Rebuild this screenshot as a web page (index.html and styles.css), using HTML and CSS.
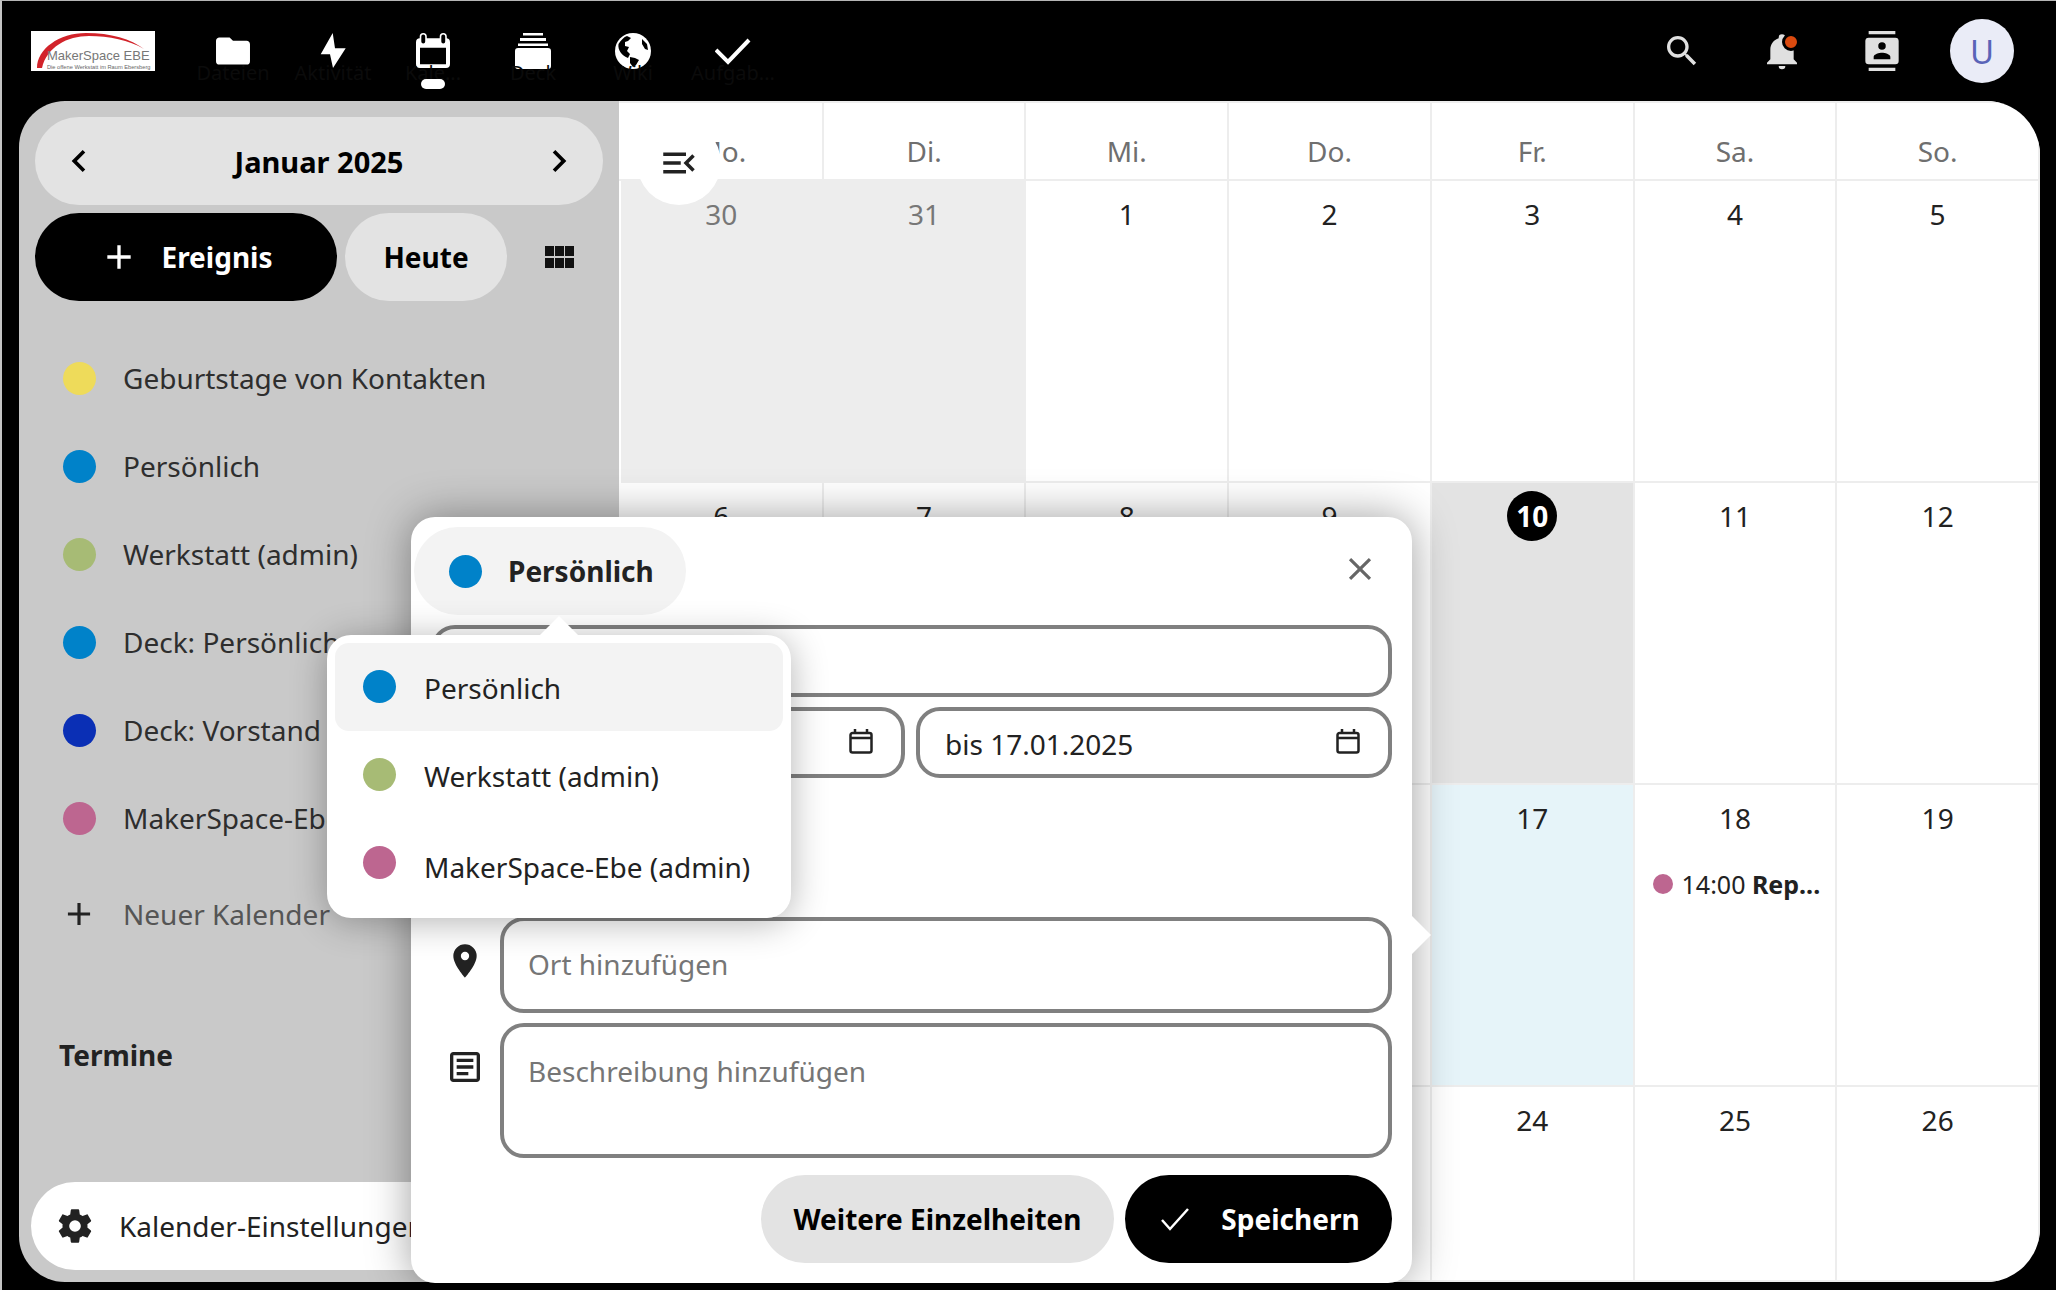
FILE: index.html
```html
<!DOCTYPE html>
<html lang="de">
  <head>
    <meta charset="UTF-8" />
    <meta name="viewport" content="width=device-width, initial-scale=1.0" />
    <title>Kalender</title>
    <link rel="stylesheet" href="styles.css">
  </head>
  <body>
    <div id="app">
      <!-- Top bar -->
      <header class="top-bar">
        <div class="logo">
          <svg class="logo-arc" viewBox="0 0 124 40" aria-hidden="true">
            <path d="M6 37C6 18 28 2 55 2c25 0 45 6 58 16C98 9 78 5 58 5 36 5 16 16 11 37Z" fill="#d2232a" />
          </svg>
          <span class="logo-name">MakerSpace EBE</span>
          <span class="logo-sub">Die offene Werkstatt im Raum Ebersberg</span>
        </div>
        <nav class="apps">
          <a class="app">
            <svg class="app-icon" viewBox="1.4 1.4 21.2 21.2"><path d="M10,4H4C2.89,4 2,4.89 2,6V18A2,2 0 0,0 4,20H20A2,2 0 0,0 22,18V8C22,6.89 21.1,6 20,6H12L10,4Z" /></svg>
            <span>Dateien</span>
          </a>
          <a class="app">
            <svg class="app-icon" viewBox="0 0 36 36"><path d="M17.700 0L5.700 21.300H15L18 35L30.700 15.300H20Z" /></svg>
            <span>Aktivität</span>
          </a>
          <a class="app active">
            <svg class="app-icon" viewBox="0 0 36 36">
              <path fill-rule="evenodd" d="M5 5.300H31a4 4 0 0 1 4 4V31a4 4 0 0 1-4 4H5a4 4 0 0 1-4-4V9.300a4 4 0 0 1 4-4ZM5 14.700V31.300H31V14.700Z" />
              <rect class="cal-ring" x="5.500" y="0.800" width="5.500" height="10.500" rx="2.750" />
              <rect class="cal-ring" x="25.500" y="0.800" width="5.500" height="10.500" rx="2.750" />
            </svg>
            <span>Kale...</span>
          </a>
          <a class="app">
            <svg class="app-icon" viewBox="0 0 36 36"><path d="M8 0H28V2.500H8ZM5 5H31V8H5ZM3 10.500H33V13H3ZM3 15H33a3 3 0 0 1 3 3V33a3 3 0 0 1-3 3H3a3 3 0 0 1-3-3V18a3 3 0 0 1 3-3Z" /></svg>
            <span>Deck</span>
          </a>
          <a class="app">
            <svg class="app-icon" viewBox="0 0 36 36">
              <circle cx="18" cy="18" r="18" fill="#fff" />
              <path fill="#000" d="M3.500 11C6 7 9 4 12 3L16 5 13 8 10 9V13L14 14 12 18 15 21 13 25C7 23 2.500 17 3.500 11ZM15 24L20 25 24 27 21 32 18 34 15 30ZM27 6L32 11 33 17 30 16 27 11Z" />
            </svg>
            <span>Wiki</span>
          </a>
          <a class="app">
            <svg class="app-icon" viewBox="0 0 36 36"><path d="M1 17L13 29 34 7" fill="none" stroke="#fff" stroke-width="4" /></svg>
            <span>Aufgab...</span>
          </a>
        </nav>
        <div class="top-actions">
          <a class="top-action">
            <svg viewBox="0 0 24 24"><path d="M9.500,3A6.500,6.500 0 0,1 16,9.500C16,11.110 15.410,12.590 14.440,13.730L14.710,14H15.500L20.500,19L19,20.500L14,15.500V14.710L13.730,14.440C12.590,15.410 11.110,16 9.500,16A6.500,6.500 0 0,1 3,9.500A6.500,6.500 0 0,1 9.500,3M9.500,5C7,5 5,7 5,9.500C5,12 7,14 9.500,14C12,14 14,12 14,9.500C14,7 12,5 9.500,5Z" /></svg>
          </a>
          <a class="top-action bell">
            <svg viewBox="0 0 24 24"><path d="M21,19V20H3V19L5,17V11C5,7.900 7.030,5.170 10,4.290C10,4.190 10,4.100 10,4A2,2 0 0,1 12,2A2,2 0 0,1 14,4C14,4.100 14,4.190 14,4.290C16.970,5.170 19,7.900 19,11V17L21,19M14,21A2,2 0 0,1 12,23A2,2 0 0,1 10,21" /></svg>
            <i class="bell-dot"></i>
          </a>
          <a class="top-action">
            <svg viewBox="0 0 24 24"><path d="M20,0H4V2H20V0M4,24H20V22H4V24M20,4H4A2,2 0 0,0 2,6V18A2,2 0 0,0 4,20H20A2,2 0 0,0 22,18V6A2,2 0 0,0 20,4M12,6.750A2.250,2.250 0 0,1 14.250,9A2.250,2.250 0 0,1 12,11.250A2.250,2.250 0 0,1 9.750,9A2.250,2.250 0 0,1 12,6.750M17,17H7V15.500C7,13.830 10.330,13 12,13C13.670,13 17,13.830 17,15.500V17Z" /></svg>
          </a>
          <a class="top-action"><span class="avatar">U</span></a>
        </div>
      </header>

      <div class="content">
        <!-- Sidebar -->
        <aside class="sidebar">
          <div class="month-pill">
            <svg viewBox="0 0 24 24"><path d="M15.410,16.580L10.830,12L15.410,7.410L14,6L8,12L14,18L15.410,16.580Z" /></svg>
            <strong>Januar 2025</strong>
            <svg viewBox="0 0 24 24"><path d="M8.590,16.580L13.170,12L8.590,7.410L10,6L16,12L10,18L8.590,16.580Z" /></svg>
          </div>
          <div class="side-buttons">
            <button class="btn btn-dark new-event">
              <svg viewBox="0 0 24 24"><path d="M19,13H13V19H11V13H5V11H11V5H13V11H19V13Z" /></svg>
              Ereignis
            </button>
            <button class="btn btn-grey today">Heute</button>
            <svg class="grid-icon" viewBox="0 0 29 22"><path d="M0 0H9V10H0ZM10 0H19V10H10ZM20 0H29V10H20ZM0 12H9V22H0ZM10 12H19V22H10ZM20 12H29V22H20Z" /></svg>
          </div>
          <ul class="cal-list">
            <li><i class="dot yellow"></i>Geburtstage von Kontakten</li>
            <li><i class="dot blue"></i>Persönlich</li>
            <li><i class="dot green"></i>Werkstatt (admin)</li>
            <li><i class="dot blue"></i>Deck: Persönlich</li>
            <li><i class="dot navy"></i>Deck: Vorstand</li>
            <li><i class="dot pink"></i>MakerSpace-Ebe (admin)</li>
          </ul>
          <div class="new-cal">
            <svg viewBox="0 0 24 24"><path d="M19,13H13V19H11V13H5V11H11V5H13V11H19V13Z" /></svg>
            Neuer Kalender
          </div>
          <h3 class="termine">Termine</h3>
          <div class="settings">
            <svg viewBox="0 0 24 24"><path d="M12,15.500A3.500,3.500 0 0,1 8.500,12A3.500,3.500 0 0,1 12,8.500A3.500,3.500 0 0,1 15.500,12A3.500,3.500 0 0,1 12,15.500M19.430,12.970C19.470,12.650 19.500,12.330 19.500,12C19.500,11.670 19.470,11.340 19.430,11L21.540,9.370C21.730,9.220 21.780,8.950 21.660,8.730L19.660,5.270C19.540,5.050 19.270,4.960 19.050,5.050L16.560,6.050C16.040,5.660 15.500,5.320 14.870,5.070L14.500,2.420C14.460,2.180 14.250,2 14,2H10C9.750,2 9.540,2.180 9.500,2.420L9.130,5.070C8.500,5.320 7.960,5.660 7.440,6.050L4.950,5.050C4.730,4.960 4.460,5.050 4.340,5.270L2.340,8.730C2.210,8.950 2.270,9.220 2.460,9.370L4.570,11C4.530,11.340 4.500,11.670 4.500,12C4.500,12.330 4.530,12.650 4.570,12.970L2.460,14.630C2.270,14.780 2.210,15.050 2.340,15.270L4.340,18.730C4.460,18.950 4.730,19.030 4.950,18.950L7.440,17.940C7.960,18.340 8.500,18.680 9.130,18.930L9.500,21.580C9.540,21.820 9.750,22 10,22H14C14.250,22 14.460,21.820 14.500,21.580L14.870,18.930C15.500,18.670 16.040,18.340 16.560,17.940L19.050,18.950C19.270,19.030 19.540,18.950 19.660,18.730L21.660,15.270C21.780,15.050 21.730,14.780 21.540,14.630L19.430,12.970Z" /></svg>
            Kalender-Einstellungen
          </div>
        </aside>

        <!-- Month grid -->
        <main class="calendar">
          <div class="week-head">
            <div>Mo.</div><div>Di.</div><div>Mi.</div><div>Do.</div><div>Fr.</div><div>Sa.</div><div>So.</div>
          </div>
          <div class="weeks">
            <div class="day other">30</div><div class="day other">31</div><div class="day">1</div><div class="day">2</div><div class="day">3</div><div class="day">4</div><div class="day">5</div>
            <div class="day">6</div><div class="day">7</div><div class="day">8</div><div class="day">9</div><div class="day today-cell"><span class="today-num">10</span></div><div class="day">11</div><div class="day">12</div>
            <div class="day">13</div><div class="day">14</div><div class="day">15</div><div class="day">16</div><div class="day selected">17</div>
            <div class="day">18
              <div class="event"><i class="event-dot"></i>14:00&nbsp;<b>Rep...</b></div>
            </div>
            <div class="day">19</div>
            <div class="day">20</div><div class="day">21</div><div class="day">22</div><div class="day">23</div><div class="day">24</div><div class="day">25</div><div class="day">26</div>
          </div>
          <button class="nav-toggle" aria-label="Navigation schließen">
            <svg viewBox="0 0 24 24"><path d="M21,15.610L19.590,17L14.580,12L19.590,7L21,8.390L17.440,12L21,15.610M3,6H16V8H3V6M3,13V11H13V13H3M3,18V16H16V18H3Z" /></svg>
          </button>
        </main>
      </div>

      <!-- New event popover -->
      <section class="popover">
        <div class="pop-head">
          <div class="cal-picker"><i class="dot blue"></i>Persönlich</div>
          <svg class="pop-close" viewBox="0 0 24 24"><path d="M19,6.410L17.590,5L12,10.590L6.410,5L5,6.410L10.590,12L5,17.590L6.410,19L12,13.410L17.590,19L19,17.590L13.410,12L19,6.410Z" /></svg>
        </div>
        <div class="field title-field"></div>
        <div class="date-row">
          <div class="field date-field date-from">
            <span></span>
            <svg viewBox="0 0 24 25"><path d="M3.500 4H20.500a2 2 0 0 1 2 2V21.500a2 2 0 0 1-2 2H3.500a2 2 0 0 1-2-2V6a2 2 0 0 1 2-2ZM1.500 9H22.500M6 0V4M18 0V4" /></svg>
          </div>
          <div class="field date-field">
            <span>bis 17.01.2025</span>
            <svg viewBox="0 0 24 25"><path d="M3.500 4H20.500a2 2 0 0 1 2 2V21.500a2 2 0 0 1-2 2H3.500a2 2 0 0 1-2-2V6a2 2 0 0 1 2-2ZM1.500 9H22.500M6 0V4M18 0V4" /></svg>
          </div>
        </div>
        <div class="icon-row location">
          <svg viewBox="0 0 24 24"><path d="M12,11.500A2.500,2.500 0 0,1 9.500,9A2.500,2.500 0 0,1 12,6.500A2.500,2.500 0 0,1 14.500,9A2.500,2.500 0 0,1 12,11.500M12,2A7,7 0 0,0 5,9C5,14.250 12,22 12,22C12,22 19,14.250 19,9A7,7 0 0,0 12,2Z" /></svg>
          <div class="field placeholder">Ort hinzufügen</div>
        </div>
        <div class="icon-row description">
          <svg viewBox="0 0 24 24"><path d="M5,3C3.890,3 3,3.890 3,5V19C3,20.110 3.890,21 5,21H19C20.110,21 21,20.110 21,19V5C21,3.890 20.110,3 19,3H5M5,5H19V19H5V5M7,7V9H17V7H7M7,11V13H17V11H7M7,15V17H14V15H7Z" /></svg>
          <div class="field placeholder">Beschreibung hinzufügen</div>
        </div>
        <div class="pop-actions">
          <button class="btn btn-grey more">Weitere Einzelheiten</button>
          <button class="btn btn-dark save">
            <svg viewBox="0 0 30 24"><path d="M2 13l8 9L28 2" fill="none" stroke="#fff" stroke-width="2.500" /></svg>
            Speichern
          </button>
        </div>

        <div class="pop-arrow"></div>

        <!-- Calendar dropdown -->
        <div class="dropdown">
          <div class="dropdown-arrow"></div>
          <div class="drop-item current"><i class="dot blue"></i><span>Persönlich</span></div>
          <div class="drop-item"><i class="dot green"></i><span>Werkstatt (admin)</span></div>
          <div class="drop-item"><i class="dot pink"></i><span>MakerSpace-Ebe (admin)</span></div>
        </div>
      </section>
    </div>
  </body>
</html>
```

FILE: styles.css
```css
* {
  box-sizing: border-box;
  margin: 0;
  padding: 0;
}

html,
body {
  height: 100%;
}

body {
  background-color: #000;
  font-family: "Noto Sans", "Open Sans", sans-serif;
  font-size: 28px;
  color: #222;
  overflow: hidden;
}

#app {
  position: relative;
  height: 100%;
  display: flex;
  flex-direction: column;
  border-top: 1px solid #b5b5b5;
  border-left: 2px solid #c4c4c4;
}

/* Top bar */
.top-bar {
  height: 100px;
  flex-shrink: 0;
  display: flex;
  align-items: flex-start;
  padding: 0 24px 0 29px;
}

.logo {
  position: relative;
  width: 124px;
  height: 40px;
  margin-top: 30px;
  margin-right: 28px;
  background-color: #fff;
  font-family: "Liberation Sans", sans-serif;
  overflow: hidden;
}

.logo-arc {
  position: absolute;
  left: 0;
  top: 0;
  width: 124px;
  height: 40px;
}

.logo-name {
  position: absolute;
  left: 16px;
  top: 17px;
  font-size: 13px;
  line-height: 16px;
  color: #777;
  white-space: nowrap;
}

.logo-sub {
  position: absolute;
  left: 16px;
  top: 32px;
  font-size: 5.700px;
  line-height: 8px;
  color: #666;
  white-space: nowrap;
}

.apps {
  display: flex;
}

.app {
  position: relative;
  width: 100px;
  height: 100px;
  padding-top: 32px;
  display: flex;
  flex-direction: column;
  align-items: center;
  font-size: 20px;
  color: #0b0b0b;
}

.app-icon {
  width: 36px;
  height: 36px;
  fill: #fff;
  flex-shrink: 0;
}

.cal-ring {
  fill: #000;
  stroke: #fff;
  stroke-width: 1.600;
}

.app span {
  margin-top: -8px;
  line-height: 24px;
  white-space: nowrap;
}

.app.active::after {
  content: "";
  position: absolute;
  left: 38px;
  top: 78px;
  width: 24px;
  height: 10px;
  border-radius: 5px;
  background-color: #fff;
}

.top-actions {
  margin-left: auto;
  display: flex;
}

.top-action {
  position: relative;
  width: 100px;
  height: 100px;
  display: flex;
  align-items: center;
  justify-content: center;
}

.top-action svg {
  width: 40px;
  height: 40px;
  fill: #e0e0e0;
}

.bell-dot {
  position: absolute;
  left: 50px;
  top: 32px;
  width: 18px;
  height: 18px;
  border-radius: 50%;
  background-color: #db4a0f;
  border: 3px solid #000;
}

.avatar {
  width: 64px;
  height: 64px;
  border-radius: 50%;
  background-color: #eaecf7;
  color: #5a64b8;
  font-size: 33px;
  display: flex;
  align-items: center;
  justify-content: center;
}

.content {
  flex: 1;
  min-height: 0;
  display: flex;
  padding: 0 16px 8px 17px;
}

/* Sidebar */
.sidebar {
  width: 600px;
  flex-shrink: 0;
  display: flex;
  flex-direction: column;
  padding: 16px 16px 12px;
  background-color: #c9c9c9;
  border-radius: 46px 0 0 46px;
}

.month-pill {
  height: 88px;
  flex-shrink: 0;
  display: flex;
  align-items: center;
  justify-content: space-between;
  padding: 0 22px;
  border-radius: 44px;
  background-color: #e3e3e3;
  color: #000;
  font-size: 29px;
}

.month-pill svg {
  width: 44px;
  height: 44px;
  fill: #000;
}

.side-buttons {
  display: flex;
  align-items: center;
  margin-top: 8px;
}

.btn {
  height: 88px;
  border: none;
  border-radius: 44px;
  font-family: inherit;
  font-size: 28px;
  font-weight: 700;
  display: flex;
  align-items: center;
  justify-content: center;
}

.btn-dark {
  background-color: #000;
  color: #fff;
}

.btn-grey {
  background-color: #e3e3e3;
  color: #000;
}

.new-event {
  width: 302px;
  gap: 22px;
}

.new-event svg {
  width: 40px;
  height: 40px;
  fill: #fff;
}

.today {
  width: 162px;
  margin-left: 8px;
}

.grid-icon {
  width: 29px;
  height: 22px;
  margin-left: 38px;
  fill: #111;
}

.cal-list {
  list-style: none;
  margin-top: 33px;
}

.cal-list li {
  height: 88px;
  display: flex;
  align-items: center;
  padding-left: 28px;
  color: #2e2e2e;
  white-space: nowrap;
}

.dot {
  width: 33px;
  height: 33px;
  border-radius: 50%;
  flex-shrink: 0;
  margin-right: 27px;
}

.yellow {
  background-color: #eedb5a;
}

.blue {
  background-color: #0082c9;
}

.green {
  background-color: #a7bb75;
}

.navy {
  background-color: #0a2fb5;
}

.pink {
  background-color: #bd6690;
}

.new-cal {
  display: flex;
  align-items: center;
  height: 88px;
  margin-top: 8px;
  padding-left: 25px;
  color: #555;
  white-space: nowrap;
}

.new-cal svg {
  width: 38px;
  height: 38px;
  margin-right: 25px;
  fill: #222;
}

.termine {
  margin-top: 78px;
  padding-left: 24px;
  font-size: 28px;
  line-height: 38px;
  color: #222;
}

.settings {
  margin-top: auto;
  margin-left: -4px;
  height: 88px;
  flex-shrink: 0;
  display: flex;
  align-items: center;
  padding-left: 24px;
  border-radius: 44px;
  background-color: #fff;
  white-space: nowrap;
}

.settings svg {
  width: 40px;
  height: 40px;
  margin-right: 24px;
  fill: #222;
}

/* Calendar */
.calendar {
  position: relative;
  flex: 1;
  min-width: 0;
  display: flex;
  flex-direction: column;
  background-color: #fff;
  border-radius: 0 54px 54px 0;
  overflow: hidden;
}

.week-head {
  height: 80px;
  flex-shrink: 0;
  display: grid;
  grid-template-columns: repeat(7, 1fr);
  padding-left: 2px;
  border-top: 2px solid #eee;
  border-bottom: 2px solid #ededed;
}

.week-head div {
  padding-top: 27px;
  line-height: 42px;
  text-align: center;
  color: #6f6f6f;
  border-right: 2px solid #ededed;
}

.weeks {
  flex: 1;
  min-height: 0;
  display: grid;
  grid-template-columns: repeat(7, 1fr);
  grid-template-rows: 302px 302px 302px 1fr;
  padding-left: 2px;
}

.day {
  padding-top: 13px;
  line-height: 40px;
  text-align: center;
  border-right: 2px solid #ededed;
  border-bottom: 2px solid #ededed;
}

.day.other {
  background-color: #ededed;
  color: #777;
}

.today-cell {
  background-color: #e3e3e3;
  padding-top: 8px;
}

.today-num {
  display: inline-block;
  width: 50px;
  height: 50px;
  line-height: 50px;
  border-radius: 50%;
  background-color: #000;
  color: #fff;
  font-weight: 700;
}

.day.selected {
  background-color: #e6f4f9;
}

.event {
  display: flex;
  align-items: center;
  margin-top: 30px;
  padding-left: 18px;
  font-size: 25px;
  line-height: 32px;
  white-space: nowrap;
}

.event-dot {
  width: 20px;
  height: 20px;
  margin-right: 9px;
  border-radius: 50%;
  background-color: #bd6690;
}

.nav-toggle {
  position: absolute;
  left: 18px;
  top: 20px;
  width: 84px;
  height: 84px;
  border: none;
  border-radius: 50%;
  background-color: #fff;
  display: flex;
  align-items: center;
  justify-content: center;
}

.nav-toggle svg {
  width: 42px;
  height: 42px;
  fill: #222;
}

/* Popover */
.popover {
  position: absolute;
  left: 409px;
  top: 516px;
  width: 1001px;
  height: 766px;
  padding: 10px 20px 20px;
  display: flex;
  flex-direction: column;
  background-color: #fff;
  border-radius: 24px;
  box-shadow: 0 0 44px rgba(0, 0, 0, 0.38);
}

.pop-arrow {
  position: absolute;
  right: -19px;
  top: 398px;
  width: 0;
  height: 0;
  border-top: 20px solid transparent;
  border-bottom: 20px solid transparent;
  border-left: 20px solid #fff;
}

.pop-head {
  display: flex;
  align-items: center;
  justify-content: space-between;
  height: 88px;
  margin-left: -17px;
  flex-shrink: 0;
}

.cal-picker {
  height: 88px;
  width: 272px;
  display: flex;
  align-items: center;
  padding-left: 35px;
  border-radius: 44px;
  background-color: #f3f3f3;
  font-weight: 700;
  color: #222;
}

.cal-picker .dot {
  margin-right: 26px;
}

.pop-close {
  width: 38px;
  height: 38px;
  margin-right: 13px;
  margin-top: -4px;
  fill: #666;
}

.field {
  border: 4px solid #808080;
  border-radius: 24px;
  background-color: #fff;
}

.title-field {
  height: 72px;
  margin-top: 10px;
  flex-shrink: 0;
}

.date-row {
  display: flex;
  gap: 11px;
  margin-top: 10px;
  height: 71px;
  flex-shrink: 0;
}

.date-field {
  flex: 1;
  display: flex;
  align-items: center;
  justify-content: space-between;
  padding: 2px 28px 0 25px;
}

.date-from {
  flex: 0 0 474px;
}

.date-field svg {
  width: 24px;
  height: 25px;
  fill: none;
  stroke: #222;
  stroke-width: 2.500;
  margin-top: -4px;
}

.icon-row {
  display: flex;
  align-items: flex-start;
  flex-shrink: 0;
}

.icon-row > svg {
  width: 40px;
  height: 40px;
  margin: 24px 15px 0 14px;
  fill: #222;
}

.icon-row .field {
  flex: 1;
  height: 100%;
}

.location {
  height: 96px;
  margin-top: 139px;
}

.description {
  height: 135px;
  margin-top: 10px;
}

.description .placeholder {
  padding-top: 25px;
}

.placeholder {
  padding: 24px 24px 0;
  line-height: 38px;
  color: #767676;
}

.pop-actions {
  display: flex;
  justify-content: flex-end;
  gap: 11px;
  margin-top: 17px;
}

.more {
  width: 353px;
}

.save {
  width: 267px;
  gap: 31px;
  padding-left: 3px;
}

.save svg {
  width: 30px;
  height: 24px;
}

/* Calendar dropdown */
.dropdown {
  position: absolute;
  left: -84px;
  top: 118px;
  width: 464px;
  height: 283px;
  padding: 8px;
  background-color: #fff;
  border-radius: 24px;
  box-shadow: 0 4px 36px rgba(0, 0, 0, 0.3);
}

.dropdown-arrow {
  position: absolute;
  left: 212px;
  top: -19px;
  width: 0;
  height: 0;
  border-left: 20px solid transparent;
  border-right: 20px solid transparent;
  border-bottom: 20px solid #fff;
}

.drop-item {
  height: 88px;
  display: flex;
  align-items: center;
  padding-left: 28px;
  border-radius: 14px;
  white-space: nowrap;
}

.drop-item .dot {
  margin-right: 28px;
  margin-top: -2px;
}

.drop-item span {
  padding-top: 2px;
}

.drop-item:last-child span {
  padding-top: 8px;
}

.drop-item.current {
  background-color: #f3f3f3;
}
```
